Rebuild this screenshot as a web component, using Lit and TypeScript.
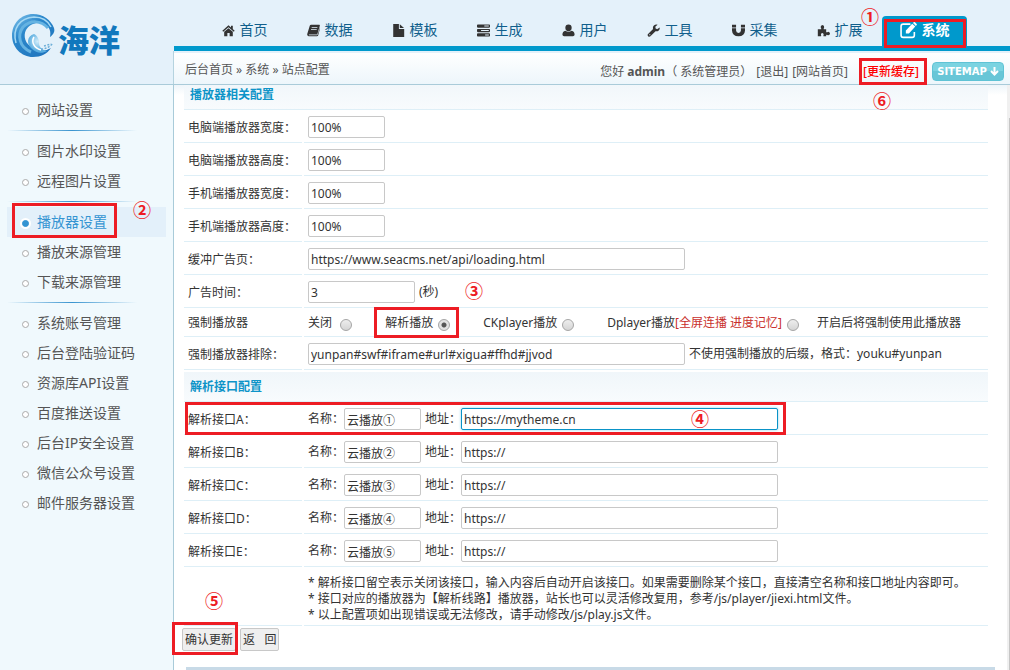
import { LitElement, html, css, svg, nothing } from "lit";
import { customElement, state } from "lit/decorators.js";

const icons: Record<string, unknown> = {
  home: svg`<path d="M8 1.6 0.4 8.3l1.1 1.2L8 3.9l6.5 5.6 1.1-1.2-2.3-2V2.2h-2.2v2.2z"/><path d="M8 5.1 2.7 9.6V15h3.9v-4h2.8v4h3.9V9.600z"/>`,
  book: svg`<path fill-rule="evenodd" d="M5 1h10.200q.8.1.6 1l-3 10.300q-.2.7-1 .7H2.600q-.6.3-.3.9h9.900l.9-.6L16 4v1.500L13.700 14q-.4 1-1.400 1H2Q0 14.600.2 12.600L3.400 2.300Q3.800 1.200 5 1zm.9 3-.3.900h7l.3-.9zm-.8 2.500-.3.900h7l.3-.9z"/>`,
  file: svg`<path d="M1.500 0h7v6H15v10H1.500zM9.600.2 14.800 5H9.600z"/>`,
  tasks: svg`<path fill-rule="evenodd" d="M1 .5h14q1 0 1 1v2q0 1-1 1H1q-1 0-1-1v-2q0-1 1-1zm8 1.300v1.400h5.500V1.800zM1 6h14q1 0 1 1v2q0 1-1 1H1q-1 0-1-1V7q0-1 1-1zm4 1.300v1.400h9.500V7.300zM1 11.500h14q1 0 1 1v2q0 1-1 1H1q-1 0-1-1v-2q0-1 1-1zm9 1.300v1.400h4.500v-1.400z"/>`,
  user: svg`<ellipse cx="8" cy="4.700" rx="3.900" ry="4.200"/><path d="M4.200 8.200Q8 11 11.800 8.200q3.700.6 3.700 5Q15.300 15 13.500 15h-11Q.7 15 .5 13.200q0-4.400 3.700-5z"/>`,
  wrench: svg`<path fill-rule="evenodd" d="M15.600 4.300q.4 2.300-1.200 3.700-1.700 1.500-3.900.9l-6.300 6.300q-1.400 1.200-2.800-.1-1.300-1.400-.1-2.700l6.200-6.200Q6.700 3.400 8.500 1.700q2-1.600 4.600-.9L10.400 3v2.200l2 1.300zM2.800 12.500v1.400h1.300v-1.400z"/>`,
  magnet: svg`<path d="M0 1h5v3.200H0zM11 1h5v3.200h-5zM0 5.200h5V8q.2 3 3 3t3-3V5.200h5V8q-.4 7-8 7.200Q.4 15 0 8z"/>`,
  puzzle: svg`<path d="M1 6.500h4.200Q5.500 5.500 4.600 4.300 4 2 6.500 1.200q2.800.5 2.300 3-.8 1.200-.5 2.300h3v3.600q1 .5 2-.4 2.200-.3 2.700 2-.2 2.600-2.600 2.200-1.200-1-2.100-.3V15H8q-.4-1 .2-2.200-.2-1.600-1.700-1.800-1.700.2-1.700 1.800.7 1.200.2 2.200H1z"/>`,
  edit: svg`<path fill="none" stroke="currentColor" stroke-width="1.500" d="M9.800 2H3Q1 2 1 4v8.500q0 2 2 2h8.500q2 0 2-2V9.500"/><path d="m5.500 8 6-6.400 2.900 2.700-6 6.500H5.500zM12.200.9l.7-.7q.6-.4 1.200 0l1.600 1.600q.4.600 0 1.100l-.7.8z"/>`,
};

const icon = (name: string) =>
  html`<svg class="icon" viewBox="0 0 16 16" aria-hidden="true">${icons[name]}</svg>`;

const tabs = [
  ["home", "首页"], ["book", "数据"], ["file", "模板"], ["tasks", "生成"],
  ["user", "用户"], ["wrench", "工具"], ["magnet", "采集"], ["puzzle", "扩展"],
];

const menu = [
  ["网站设置"],
  ["图片水印设置", "远程图片设置"],
  ["播放器设置", "播放来源管理", "下载来源管理"],
  ["系统账号管理", "后台登陆验证码", "资源库API设置", "百度推送设置", "后台IP安全设置", "微信公众号设置", "邮件服务器设置"],
];

const sizes = ["电脑端播放器宽度", "电脑端播放器高度", "手机端播放器宽度", "手机端播放器高度"];

const lines = [
  ["A", "云播放①", "https://mytheme.cn"],
  ["B", "云播放②", "https://"],
  ["C", "云播放③", "https://"],
  ["D", "云播放④", "https://"],
  ["E", "云播放⑤", "https://"],
];

@customElement("app-root")
export class AppRoot extends LitElement {
  @state() private current = "播放器设置";

  static styles = css`
    :host {
      display: block;
      font: 12px/16px "Noto Sans", "Noto Sans CJK SC", sans-serif;
      color: #333;
    }
    * { box-sizing: border-box; }
    a { color: inherit; text-decoration: none; }
    .page { display: flex; flex-direction: column; min-height: 100vh; background: #fff; }

    .header { position: relative; z-index: 3; display: grid; grid-template-columns: 174px 1fr; background: #e4f1fa; border-bottom: 1px solid #a9cbd9; }
    .logo { display: flex; align-items: center; gap: 2px; padding: 0 0 14px 11px; color: #1178bd; font: 900 31px/40px "Noto Sans CJK SC", sans-serif; }
    .logo svg { width: 45px; height: 45px; }
    .brand { padding-top: 8px; }
    .tabs { display: flex; align-items: flex-end; height: 51px; padding-left: 28px; border-bottom: 5px solid #0099cc; }
    .tab { display: flex; align-items: center; justify-content: center; gap: 5px; width: 85px; height: 30px; padding-bottom: 2px; font-size: 14px; color: #105f8c; }
    .tab .icon { width: 13px; height: 13px; color: #333; }
    .tab.active { position: relative; background: #0099cc; border-radius: 4px 4px 0 0; color: #fff; font-weight: 700; }
    .tab.active .icon { width: 17px; height: 17px; color: #fff; }
    .icon { fill: currentColor; flex: none; }
    .bar { display: flex; align-items: center; justify-content: space-between; height: 33px; padding: 4px 6px 0 11px; margin-left: -1px; border-left: 1px solid #b5d3df; background: linear-gradient(#e4f1fa 0 2px, #fff 2px, #edf6fb); color: #555; }
    .account { display: flex; align-items: center; gap: 4px; padding-top: 4px; }
    .cache { position: relative; margin: 0 9px 0 11px; color: #f00; font-weight: 500; }
    .sitemap { display: flex; align-items: center; justify-content: center; gap: 3px; width: 72px; height: 19px; border: 1px solid #5fc3d5; border-radius: 4px; background: linear-gradient(#7bd3e1 50%, #68c6d7 50%); color: #fff; font: 700 10px/16px "DejaVu Sans", sans-serif; }
    .sitemap svg { width: 9px; height: 9px; }

    .body { flex: 1; display: grid; grid-template-columns: 174px 1fr 3px; }
    .side { padding: 10px 7px 0; background: #f0f9fd; border-right: 1px solid #a9cbd9; }
    .group + .group::before { content: ""; display: block; height: 1px; margin: 5px 29px 5px 0; background: linear-gradient(90deg, transparent, #3a94cf 50%, transparent); }
    .item { display: flex; align-items: center; gap: 8px; height: 30px; padding-left: 15px; font-size: 14px; line-height: 20px; color: #555; }
    .dot { width: 7px; height: 7px; margin-top: 3px; border: 1px solid #aaa; border-radius: 50%; background: #fff; }
    .item.active { position: relative; background: #e3f0fa; color: #3494d2; }
    .item.active .dot { border-color: #3494d2; background: #3494d2; box-shadow: 0 0 0 2px #fff; }
    .scroll { background: linear-gradient(90deg, #f0f0f0 2px, #c6c6c6 2px); border-top: 33px solid #f0f0f0; }

    .main { background: linear-gradient(#eef5fa, #fff 10px); }
    .form { width: calc(100% - 25px); margin: -7px 17px 0 8px; border-spacing: 2px; table-layout: fixed; }
    th, td { height: 31px; padding: 4px; border-bottom: 1px solid #deeff7; text-align: left; font-weight: 400; vertical-align: middle; }
    th { padding-top: 6px; }
    .name { width: 118px; }
    .title { height: 30px; padding: 0 6px; background: linear-gradient(#f0f6fa, #f8fbfd); color: #0e94c8; font-weight: 700; }
    .short th, .short td { height: 27px; padding: 0 4px; }
    .fields { display: flex; align-items: center; gap: 4px; }
    .radios { display: flex; align-items: center; gap: 33px; }
    .radios label { display: flex; align-items: center; gap: 5px; }
    .picked { position: relative; }
    .hot { color: #c9302c; }
    .last { display: flex; align-items: center; gap: 18px; }
    .text { width: 77px; height: 22px; padding: 1px 2px 0; border: 1px solid #c8c8c8; border-radius: 2px; background: #fff; color: #333; font: inherit; outline: none; }
    .text.medium { width: 107px; }
    .text.long { width: 377px; }
    .text.address { width: 317px; }
    .text.focus { border-color: #0a93c7; box-shadow: 0 0 3px #8fd0ea; }
    .caption { width: 32px; white-space: nowrap; }
    .radio { appearance: none; width: 12px; height: 12px; margin: 3px 0 0; border: 1px solid #a5a5a5; border-radius: 50%; background: linear-gradient(#eee, #d5d5d5); }
    .radio:checked { background: radial-gradient(circle, #555 0 2px, #e2e2e2 3px); }
    .anchor { position: relative; }
    .remarks { padding: 6px 4px 2px; }
    .notes { margin: 0; padding: 0; list-style: none; }
    .actions { position: relative; display: flex; gap: 4px; padding-left: 8px; }
    .button { height: 23px; padding: 0 2px; border: 1px solid #c8c8c8; border-radius: 2px; background: #efefef; color: #333; font: inherit; white-space: pre; }
    .foot { height: 3px; margin: 16px 12px 0; background: #c8dae7; }

    .box { position: absolute; z-index: 1; border: 3px solid #ed1c24; pointer-events: none; }
    .num { position: absolute; z-index: 2; width: 18px; color: #ed1c24; font: 700 18px/18px "Noto Sans CJK SC", sans-serif; pointer-events: none; }
    .box1 { inset: 3px 1px -2px 2px; }
    .num1 { left: -21px; top: -9px; }
    .box2 { left: 5px; top: -4px; width: 105px; height: 35px; }
    .num2 { left: 126px; top: -7px; }
    .box3 { inset: -8px -9px -7px -11px; }
    .num3 { left: 161px; top: 4px; }
    .box4 { left: 1px; top: -2px; width: 601px; height: 33px; }
    .num4 { left: 507px; top: 5px; }
    .box5 { left: -2px; top: -6px; width: 66px; height: 33px; }
    .num5 { left: 31px; top: -37px; }
    .box6 { inset: -6px -8px -5px -4px; }
    .num6 { left: 10px; top: 27px; }
  `;

  private group(items: string[]) {
    return html`<div class="group">
      ${items.map((name) => {
        const on = name === this.current;
        return html`<a class="item ${on ? "active" : ""}" href="#" @click=${(e: Event) => { e.preventDefault(); this.current = name; }}>
          <span class="dot"></span>${name}
          ${name === "播放器设置" && on ? html`<span class="box box2"></span><span class="num num2">②</span>` : nothing}
        </a>`;
      })}
    </div>`;
  }

  render() {
    return html`<div class="page">
      <header class="header">
        <div class="logo">
          <svg viewBox="0 0 45 45" aria-hidden="true">
            <defs>
              <linearGradient id="sea" x1="0" y1="0" x2=".8" y2="1"><stop offset="0" stop-color="#86c9ee"/><stop offset=".4" stop-color="#2b87cb"/><stop offset="1" stop-color="#1f74bd"/></linearGradient>
              <radialGradient id="foam" cx=".5" cy=".4"><stop offset="0" stop-color="#d2edfb"/><stop offset="1" stop-color="#58acdf"/></radialGradient>
            </defs>
            <path fill="url(#sea)" d="M22 1C10 1 1 10.500 1 22.500S10.500 44 22 44c8 0 14-3 18-9-5 3-12 4-18 0-8-4-10-12-7-18 4-7 13-9 20-5 4 3 5 7 4 12 4-3 5-6 4-9C40 7 32 1 22 1z"/>
            <path fill="none" stroke="#a5d9f4" stroke-width="1.500" d="M5 30C1 15 9 5 23 4c8 0 14 4 17 10"/>
            <path fill="none" stroke="#65b3e2" stroke-width="3" d="M20 39C8 34 6 22 12 14 19 7 30 7 37 15"/>
            <path fill="url(#foam)" d="M23 21c-7 2-8 10-2 15 4 4 10 5 15 2-5-1-8-4-8-8 0-3-1-7-5-9z"/>
            <path fill="none" stroke="#fff" stroke-width="1.500" d="M23 24c-3 5 0 11 7 13"/>
            <path fill="none" stroke="#6eafd8" stroke-width="1.500" stroke-dasharray="2 1.500" d="M30 36c5 0 9-2 12-6M33 33l7-2"/>
          </svg>
          <span class="brand">海洋</span>
        </div>
        <div>
          <nav class="tabs">
            ${tabs.map(([name, label]) => html`<a class="tab" href="#">${icon(name)}${label}</a>`)}
            <a class="tab active" href="#">${icon("edit")}系统<span class="box box1"></span><span class="num num1">①</span></a>
          </nav>
          <div class="bar">
            <div>后台首页 » 系统 » 站点配置</div>
            <div class="account">
              <span>您好 <b>admin</b>（ 系统管理员）</span>
              <a href="#">[退出]</a>
              <a href="#">[网站首页]</a>
              <a class="cache" href="#">[更新缓存]<span class="box box6"></span><span class="num num6">⑥</span></a>
              <a class="sitemap" href="#">SITEMAP<svg viewBox="0 0 9 9" aria-hidden="true"><path fill="none" stroke="#fff" stroke-width="2" d="M4.500 0v7M1 4l3.500 3.500L8 4"/></svg></a>
            </div>
          </div>
        </div>
      </header>
      <div class="body">
        <nav class="side">${menu.map((g) => this.group(g))}</nav>
        <main class="main">
          <form @submit=${(e: Event) => e.preventDefault()}>
            <table class="form">
              <colgroup><col class="name"><col></colgroup>
              <tbody>
                <tr><th class="title" colspan="2">播放器相关配置</th></tr>
                ${sizes.map((s, i) => html`<tr>
                  <th><label for="size${i}">${s}：</label></th>
                  <td><div class="fields"><input class="text" id="size${i}" .value=${"100%"}></div></td>
                </tr>`)}
                <tr>
                  <th><label for="ad">缓冲广告页：</label></th>
                  <td><div class="fields"><input class="text long" id="ad" .value=${"https://www.seacms.net/api/loading.html"}></div></td>
                </tr>
                <tr>
                  <th><label for="time">广告时间：</label></th>
                  <td class="anchor"><div class="fields"><input class="text medium" id="time" .value=${"3"}><span>(秒)</span></div><span class="num num3">③</span></td>
                </tr>
                <tr class="short">
                  <th>强制播放器</th>
                  <td><div class="last">
                    <div class="radios">
                      <label>关闭&nbsp;<input class="radio" type="radio" name="force"></label>
                      <label class="picked">解析播放<input class="radio" type="radio" name="force" checked><span class="box box3"></span></label>
                      <label>CKplayer播放<input class="radio" type="radio" name="force"></label>
                      <label><span>Dplayer播放<span class="hot">[全屏连播 进度记忆]</span></span><input class="radio" type="radio" name="force"></label>
                    </div>
                    <span>开启后将强制使用此播放器</span>
                  </div></td>
                </tr>
                <tr>
                  <th><label for="skip">强制播放器排除：</label></th>
                  <td><div class="fields"><input class="text long" id="skip" .value=${"yunpan#swf#iframe#url#xigua#ffhd#jjvod"}><span>不使用强制播放的后缀，格式：youku#yunpan</span></div></td>
                </tr>
                <tr><th class="title" colspan="2">解析接口配置</th></tr>
                ${lines.map(([k, name, url], i) => html`<tr>
                  <th class="anchor">解析接口${k}：${i === 0 ? html`<span class="box box4"></span><span class="num num4">④</span>` : nothing}</th>
                  <td><div class="fields">
                    <label class="caption" for="n${k}">名称：</label><input class="text" id="n${k}" .value=${name}>
                    <label class="caption" for="u${k}">地址：</label><input class="text address ${i === 0 ? "focus" : ""}" id="u${k}" .value=${url}>
                  </div></td>
                </tr>`)}
                <tr>
                  <th></th>
                  <td class="remarks"><ul class="notes">
                    <li>* 解析接口留空表示关闭该接口，输入内容后自动开启该接口。如果需要删除某个接口，直接清空名称和接口地址内容即可。</li>
                    <li>* 接口对应的播放器为【解析线路】播放器，站长也可以灵活修改复用，参考/js/player/jiexi.html文件。</li>
                    <li>* 以上配置项如出现错误或无法修改，请手动修改/js/play.js文件。</li>
                  </ul></td>
                </tr>
              </tbody>
            </table>
            <div class="actions">
              <button class="button" type="submit">确认更新</button>
              <button class="button" type="reset">返   回</button>
              <span class="box box5"></span><span class="num num5">⑤</span>
            </div>
          </form>
          <div class="foot"></div>
        </main>
        <div class="scroll"></div>
      </div>
    </div>`;
  }
}
